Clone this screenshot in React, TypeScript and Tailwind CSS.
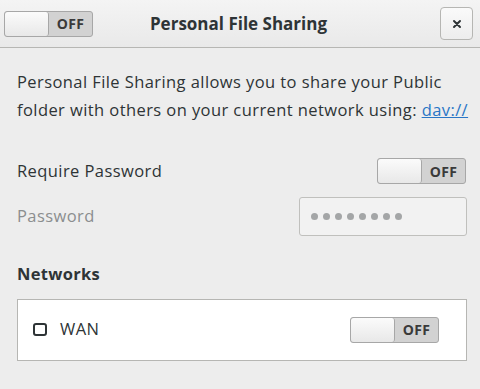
function Toggle() {
  return (
    <div className="flex h-[26px] w-[89px] overflow-hidden rounded-[3px] border border-[#a7a7a7] bg-[#d2d2d2]">
      <div className="w-[44px] rounded-[3px] border-r border-[#a7a7a7] bg-gradient-to-b from-[#fbfbfb] to-[#e8e8e8]" />
      <div className="flex flex-1 items-center justify-center text-[14px] font-bold tracking-[0.3px] text-[#3a3a3a]">OFF</div>
    </div>
  );
}

export default function App() {
  return (
    <div
      className="h-[389px] w-[480px] bg-[#ededed] text-[#2e3436]"
      style={{ fontFamily: '"Open Sans", "DejaVu Sans", sans-serif' }}
    >
      <div className="flex h-[48px] items-center border-b border-[#b6b6b3] bg-gradient-to-b from-[#f4f4f4] to-[#e9e9e9] pl-[4px] pr-[7px]">
        <div className="flex flex-1 justify-start">
          <Toggle />
        </div>
        <div className="text-[17px] font-bold text-[#2e3436]">Personal File Sharing</div>
        <div className="flex flex-1 justify-end">
          <button className="flex h-[33px] w-[33px] items-center justify-center rounded-[4px] border border-[#b6b6b3] bg-gradient-to-b from-[#fafafa] to-[#ededed]">
            <svg width="10" height="10" viewBox="0 0 10 10">
              <path d="M2 2 L8 8 M8 2 L2 8" stroke="#2e3436" strokeWidth="2" strokeLinecap="round" />
            </svg>
          </button>
        </div>
      </div>

      <div className="pl-[17px] pr-[13px] pt-[20px] text-[16.5px] tracking-[0.42px]">
        <p className="leading-[28px] whitespace-nowrap">
          Personal File Sharing allows you to share your Public
          <br />
          folder with others on your current network using:{' '}
          <span className="text-[#2a76c6] underline">dav://</span>
        </p>

        <div className="mt-[34px] flex items-center justify-between pr-[1px]">
          <span>Require Password</span>
          <Toggle />
        </div>

        <div className="mt-[13px] flex items-center justify-between">
          <span className="text-[#8b8e8f]">Password</span>
          <div className="flex h-[39px] w-[168px] items-center gap-[5px] rounded-[3px] border border-[#c0c0bd] bg-[#f2f2f2] pl-[11px]">
            {Array.from({ length: 8 }).map((_, i) => (
              <span key={i} className="h-[7px] w-[7px] rounded-full bg-[#a4a6a7]" />
            ))}
          </div>
        </div>

        <div className="mt-[26px] font-bold tracking-[0.3px]">Networks</div>

        <div className="mt-[12px] flex h-[62px] items-center justify-between border border-[#b6b6b3] bg-white pl-[15px] pr-[27px]">
          <div className="flex items-center gap-[13px]">
            <span className="block h-[13px] w-[14px] shrink-0 rounded-[3px] border-2 border-[#2e3436]" />
            <span>WAN</span>
          </div>
          <Toggle />
        </div>
      </div>
    </div>
  );
}
